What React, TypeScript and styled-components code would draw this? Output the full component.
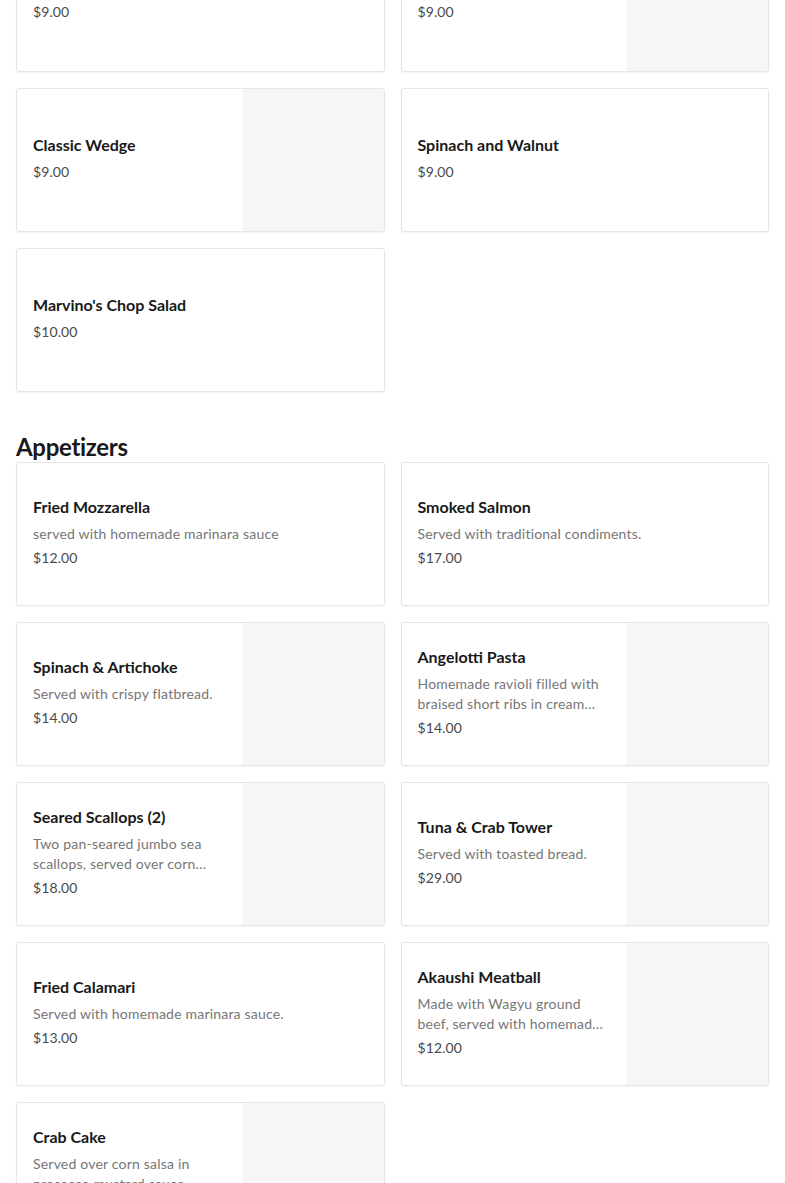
import styled, { createGlobalStyle } from "styled-components";

const GlobalStyle = createGlobalStyle`
  body {
    margin: 0;
    background: #ffffff;
    font-family: Lato, "Liberation Sans", sans-serif;
    color: #191919;
  }
`

type Item = {
  name: string
  description?: string
  price: string
  hasImage?: boolean
}

type Section = {
  title: string
  items: Item[]
}

const sections: Section[] = [
  {
    title: "Salads",
    items: [
      { name: "House Salad", price: "$9.00" },
      { name: "Caesar Salad", price: "$9.00", hasImage: true },
      { name: "Classic Wedge", price: "$9.00", hasImage: true },
      { name: "Spinach and Walnut", price: "$9.00" },
      { name: "Marvino's Chop Salad", price: "$10.00" },
    ],
  },
  {
    title: "Appetizers",
    items: [
      { name: "Fried Mozzarella", description: "served with homemade marinara sauce", price: "$12.00" },
      { name: "Smoked Salmon", description: "Served with traditional condiments.", price: "$17.00" },
      { name: "Spinach & Artichoke", description: "Served with crispy flatbread.", price: "$14.00", hasImage: true },
      {
        name: "Angelotti Pasta",
        description: "Homemade ravioli filled with braised short ribs in cream sauce with mushrooms.",
        price: "$14.00",
        hasImage: true,
      },
      {
        name: "Seared Scallops (2)",
        description: "Two pan-seared jumbo sea scallops, served over corn puree and bacon.",
        price: "$18.00",
        hasImage: true,
      },
      { name: "Tuna & Crab Tower", description: "Served with toasted bread.", price: "$29.00", hasImage: true },
      { name: "Fried Calamari", description: "Served with homemade marinara sauce.", price: "$13.00" },
      {
        name: "Akaushi Meatball",
        description: "Made with Wagyu ground beef, served with homemade marinara sauce.",
        price: "$12.00",
        hasImage: true,
      },
      {
        name: "Crab Cake",
        description: "Served over corn salsa in prosecco mustard sauce.",
        price: "$16.00",
        hasImage: true,
      },
    ],
  },
]

// the view is scrolled a little into the menu, so the first row is half hidden
const Page = styled.div`
  padding: 0 16px 40px;
  margin-top: -72px;
`

const MenuSection = styled.section`
  & + & {
    margin-top: 40px;
  }
`

const SectionTitle = styled.h2<{ $hidden?: boolean }>`
  margin: 0;
  font-size: 24px;
  line-height: 30px;
  font-weight: 700;
  letter-spacing: -0.3px;
  color: #191919;
  display: ${p => (p.$hidden ? "none" : "block")};
`

const Grid = styled.div`
  display: grid;
  grid-template-columns: 1fr 1fr;
  gap: 16px;
`

const Card = styled.div`
  display: flex;
  height: 144px;
  box-sizing: border-box;
  border: 1px solid #e6e6e6;
  border-radius: 3px;
  box-shadow: 0 1px 2px rgba(0, 0, 0, 0.05);
  overflow: hidden;
  background: #ffffff;
`

const Info = styled.div`
  flex: 1;
  min-width: 0;
  display: flex;
  flex-direction: column;
  justify-content: center;
  padding: 0 16px;
  margin-top: -6px;
`

const Name = styled.div`
  font-size: 16px;
  line-height: 24px;
  font-weight: 700;
  color: #191919;
  margin-bottom: 1px;
`

const Description = styled.div`
  margin-top: 4px;
  font-size: 14px;
  line-height: 20px;
  letter-spacing: 0.2px;
  color: #767676;
  display: -webkit-box;
  -webkit-line-clamp: 2;
  -webkit-box-orient: vertical;
  overflow: hidden;
`

const Price = styled.div`
  margin-top: 4px;
  font-size: 14px;
  line-height: 20px;
  letter-spacing: 0.1px;
  color: #494949;
`

const Photo = styled.div`
  flex: 0 0 142px;
  height: 100%;
  background: #f6f6f6;
`

const MenuCard = ({ item }: { item: Item }) => (
  <Card>
    <Info>
      <Name>{item.name}</Name>
      {item.description && <Description>{item.description}</Description>}
      <Price>{item.price}</Price>
    </Info>
    {item.hasImage && <Photo />}
  </Card>
)

const App = () => {
  return (
    <>
      <GlobalStyle />
      <Page>
        {sections.map((section, i) => (
          <MenuSection key={section.title}>
            <SectionTitle $hidden={i === 0}>{section.title}</SectionTitle>
            <Grid>
              {section.items.map(item => (
                <MenuCard key={item.name} item={item} />
              ))}
            </Grid>
          </MenuSection>
        ))}
      </Page>
    </>
  )
}

export default App
